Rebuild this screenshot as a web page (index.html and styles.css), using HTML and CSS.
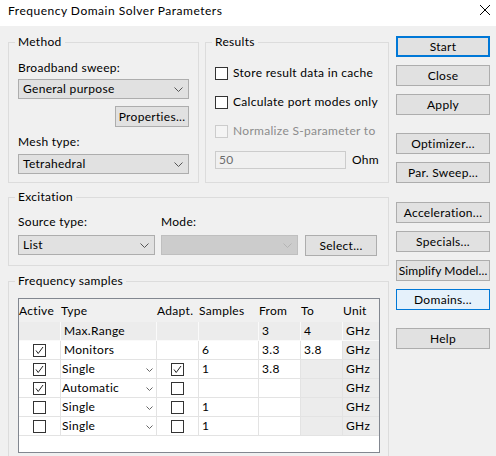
FILE: index.html
```html
<!DOCTYPE html>
<html lang="en">
<head>
    <meta charset="UTF-8">
    <title>Frequency Domain Solver Parameters</title>
    <link rel="stylesheet" href="styles.css">
</head>
<body>

    <div class="titlebar">
        <span class="title">Frequency Domain Solver Parameters</span>
        <svg class="close" width="10" height="10" viewBox="0 0 10 10"><path d="M0 0L10 10M10 0L0 10" stroke="#000" stroke-width="1"/></svg>
    </div>

    <div class="dialog">
        <div class="left">
            <div class="top">
                <!-- Method -->
                <fieldset class="group method">
                    <legend>Method</legend>
                    <div class="label first">Broadband sweep:</div>
                    <div class="combo">
                        <span>General purpose</span>
                        <svg width="9" height="5" viewBox="0 0 9 5"><polyline points="0.5,0.5 4.5,4.5 8.5,0.5" fill="none" stroke="#555"/></svg>
                    </div>
                    <div class="btn props">Properties...</div>
                    <div class="label mesh">Mesh type:</div>
                    <div class="combo mesh-combo">
                        <span>Tetrahedral</span>
                        <svg width="9" height="5" viewBox="0 0 9 5"><polyline points="0.5,0.5 4.5,4.5 8.5,0.5" fill="none" stroke="#555"/></svg>
                    </div>
                </fieldset>

                <!-- Results -->
                <fieldset class="group results">
                    <legend>Results</legend>
                    <div class="check-row first">
                        <span class="cb"></span>Store result data in cache
                    </div>
                    <div class="check-row">
                        <span class="cb"></span>Calculate port modes only
                    </div>
                    <div class="check-row disabled">
                        <span class="cb off"></span>Normalize S-parameter to
                    </div>
                    <div class="input-row">
                        <div class="textbox">50</div>
                        <span>Ohm</span>
                    </div>
                </fieldset>
            </div>

            <!-- Excitation -->
            <fieldset class="group excitation">
                <legend>Excitation</legend>
                <div class="exc-grid">
                    <div class="label">Source type:</div>
                    <div class="label">Mode:</div>
                    <div></div>
                    <div class="combo">
                        <span>List</span>
                        <svg width="9" height="5" viewBox="0 0 9 5"><polyline points="0.5,0.5 4.5,4.5 8.5,0.5" fill="none" stroke="#555"/></svg>
                    </div>
                    <div class="combo off">
                        <span></span>
                        <svg width="9" height="5" viewBox="0 0 9 5"><polyline points="0.5,0.5 4.5,4.5 8.5,0.5" fill="none" stroke="#b4b4b4"/></svg>
                    </div>
                    <div class="btn">Select...</div>
                </div>
            </fieldset>

            <!-- Frequency samples -->
            <fieldset class="group samples">
                <legend>Frequency samples</legend>
                <div class="grid-box">
                    <table class="grid">
                        <colgroup>
                            <col style="width:42px"><col style="width:96px"><col style="width:42px">
                            <col style="width:60px"><col style="width:42px"><col style="width:42px"><col style="width:36px">
                        </colgroup>
                        <thead>
                            <tr>
                                <th>Active</th><th>Type</th><th>Adapt.</th><th>Samples</th><th>From</th><th>To</th><th>Unit</th>
                            </tr>
                        </thead>
                        <tbody>
                            <tr class="range">
                                <td></td><td>Max.Range</td><td></td><td></td><td>3</td><td>4</td><td>GHz</td>
                            </tr>
                            <tr>
                                <td class="c"><span class="cb"><svg width="11" height="11" viewBox="0 0 11 11"><polyline points="2,5.5 4.2,8.5 9,2" fill="none" stroke="#222"/></svg></span></td>
                                <td>Monitors</td><td></td><td>6</td><td>3.3</td><td>3.8</td><td class="gray">GHz</td>
                            </tr>
                            <tr>
                                <td class="c"><span class="cb"><svg width="11" height="11" viewBox="0 0 11 11"><polyline points="2,5.5 4.2,8.5 9,2" fill="none" stroke="#222"/></svg></span></td>
                                <td class="drop">Single<svg width="7" height="4" viewBox="0 0 7 4"><polyline points="0.5,0.5 3.5,3.5 6.5,0.5" fill="none" stroke="#666"/></svg></td>
                                <td class="c"><span class="cb"><svg width="11" height="11" viewBox="0 0 11 11"><polyline points="2,5.5 4.2,8.5 9,2" fill="none" stroke="#222"/></svg></span></td>
                                <td>1</td><td>3.8</td><td class="gray"></td><td class="gray">GHz</td>
                            </tr>
                            <tr>
                                <td class="c"><span class="cb"><svg width="11" height="11" viewBox="0 0 11 11"><polyline points="2,5.5 4.2,8.5 9,2" fill="none" stroke="#222"/></svg></span></td>
                                <td class="drop">Automatic<svg width="7" height="4" viewBox="0 0 7 4"><polyline points="0.5,0.5 3.5,3.5 6.5,0.5" fill="none" stroke="#666"/></svg></td>
                                <td class="c"><span class="cb"></span></td>
                                <td></td><td></td><td class="gray"></td><td class="gray">GHz</td>
                            </tr>
                            <tr>
                                <td class="c"><span class="cb"></span></td>
                                <td class="drop">Single<svg width="7" height="4" viewBox="0 0 7 4"><polyline points="0.5,0.5 3.5,3.5 6.5,0.5" fill="none" stroke="#666"/></svg></td>
                                <td class="c"><span class="cb"></span></td>
                                <td>1</td><td></td><td class="gray"></td><td class="gray">GHz</td>
                            </tr>
                            <tr>
                                <td class="c"><span class="cb"></span></td>
                                <td class="drop">Single<svg width="7" height="4" viewBox="0 0 7 4"><polyline points="0.5,0.5 3.5,3.5 6.5,0.5" fill="none" stroke="#666"/></svg></td>
                                <td class="c"><span class="cb"></span></td>
                                <td>1</td><td></td><td class="gray"></td><td class="gray">GHz</td>
                            </tr>
                        </tbody>
                    </table>
                </div>
            </fieldset>
        </div>

        <div class="buttons">
            <div class="btn default">Start</div>
            <div class="btn">Close</div>
            <div class="btn">Apply</div>
            <div class="btn sep">Optimizer...</div>
            <div class="btn">Par. Sweep...</div>
            <div class="btn sep wide">Acceleration...</div>
            <div class="btn">Specials...</div>
            <div class="btn tight">Simplify Model...</div>
            <div class="btn hover">Domains...</div>
            <div class="btn sep">Help</div>
        </div>
    </div>

</body>
</html>
```

FILE: styles.css
```css
body {
    margin: 0;
    width: 496px;
    height: 456px;
    overflow: hidden;
    background-color: #f0f0f0;
    font-family: Lato, "Noto Sans", sans-serif;
    font-size: 12px;
    line-height: 16px;
    letter-spacing: 0.3px;
    color: #000;
}

/* title bar */
.titlebar {
    height: 26px;
    background-color: #fff;
    display: flex;
    align-items: flex-start;
    justify-content: space-between;
    padding: 3px 6px 0 8px;
    box-sizing: border-box;
}
.title {
    letter-spacing: 0.5px;
}
.close {
    margin-top: 2px;
}

.dialog {
    display: flex;
    gap: 7px;
    padding: 8px 6px 0 8px;
}
.left {
    width: 381px;
}
.top {
    display: flex;
    gap: 6px;
}

/* group boxes */
.group {
    margin: 0;
    padding: 0 9px 8px 9px;
    border: 1px solid #dcdcdc;
    min-width: 0;
}
.group legend {
    padding: 0 3px;
    margin-left: -3px;
}
.method {
    width: 191px;
    box-sizing: border-box;
}
.results {
    width: 184px;
    box-sizing: border-box;
}
.excitation {
    margin-top: 6px;
    padding-bottom: 9px;
}
.samples {
    margin-top: 7px;
}

.label.first {
    margin-top: 10px;
}
.label.mesh {
    margin-top: 7px;
}

/* combo boxes */
.combo {
    height: 20px;
    box-sizing: border-box;
    border: 1px solid #adadad;
    background-color: #e1e1e1;
    display: flex;
    align-items: center;
    justify-content: space-between;
    padding: 0 5px 0 4px;
    margin-top: 3px;
}
.combo.mesh-combo {
    margin-top: 4px;
}
.combo.off {
    background-color: #cccccc;
    border-color: #bfbfbf;
}

/* push buttons */
.btn {
    height: 21px;
    box-sizing: border-box;
    border: 1px solid #adadad;
    background-color: #e1e1e1;
    display: flex;
    align-items: center;
    justify-content: center;
    white-space: nowrap;
}
.btn.tight {
    letter-spacing: 0.1px;
}
.btn.props {
    width: 74px;
    margin: 7px 0 0 auto;
}
.btn.default {
    border: 2px solid #0078d7;
}
.btn.hover {
    border-color: #0078d7;
    background-color: #e5f1fb;
}

/* checkboxes */
.check-row {
    display: flex;
    align-items: center;
    gap: 5px;
    height: 16px;
    margin-top: 13px;
}
.check-row.first {
    margin-top: 15px;
}
.check-row.disabled {
    color: #8c8c8c;
}
.cb {
    width: 13px;
    height: 13px;
    box-sizing: border-box;
    border: 1px solid #333;
    background-color: #fff;
    display: inline-flex;
    flex-shrink: 0;
}
.cb.off {
    border-color: #cccccc;
    background-color: #f4f4f4;
}

.input-row {
    display: flex;
    align-items: center;
    gap: 6px;
    margin-top: 12px;
}
.textbox {
    width: 132px;
    height: 18px;
    box-sizing: border-box;
    border: 1px solid #cccccc;
    background-color: #f0f0f0;
    color: #6d6d6d;
    padding-left: 3px;
    line-height: 16px;
}

/* excitation */
.exc-grid {
    display: grid;
    grid-template-columns: 137px 137px 73px;
    column-gap: 6px;
    margin-top: 9px;
}
.exc-grid .combo {
    margin-top: 5px;
}
.exc-grid .btn {
    margin: 5px 0 0 1px;
}

/* frequency samples grid */
.grid-box {
    width: 362px;
    height: 155px;
    box-sizing: border-box;
    margin-top: 9px;
    border: 1px solid #828790;
    background-color: #fff;
}
.grid {
    border-collapse: separate;
    border-spacing: 0;
    table-layout: fixed;
    width: 360px;
}
.grid th {
    height: 23px;
    padding: 0;
    text-align: left;
    font-weight: normal;
    background-color: #f0f0f0;
    white-space: nowrap;
}
.grid td {
    height: 18px;
    padding: 0 0 0 3px;
    border-right: 1px solid #e3e3e3;
    border-bottom: 1px solid #e3e3e3;
    white-space: nowrap;
}
.grid td:last-child {
    border-right: none;
}
.grid .range td {
    background-color: #ececec;
    border-color: #fafafa;
}
.grid td.gray {
    background-color: #ececec;
}
.grid td.c {
    padding: 0;
    text-align: center;
}
.grid td.c .cb {
    vertical-align: middle;
    align-items: center;
    justify-content: center;
}
.grid td.drop {
    padding: 0 3px 0 1px;
}
.grid td.drop svg {
    float: right;
    margin-top: 7px;
}

/* right-hand buttons */
.buttons {
    width: 94px;
    display: flex;
    flex-direction: column;
    gap: 8px;
    padding-top: 2px;
}
.buttons .sep {
    margin-top: 10px;
}
.buttons .sep.wide {
    margin-top: 11px;
}
```
